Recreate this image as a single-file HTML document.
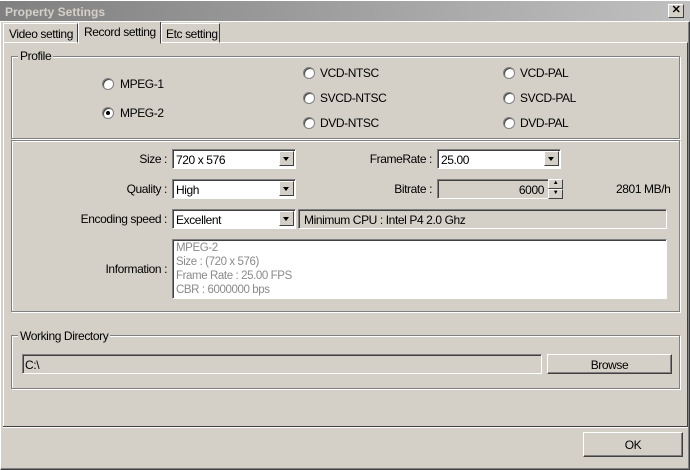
<!DOCTYPE html>
<html><head><style>
*{margin:0;padding:0;box-sizing:border-box}
body{width:690px;height:470px;background:#d4d0c8;font-family:"Liberation Sans",sans-serif;font-size:11px;color:#000;position:relative;overflow:hidden}
.a{position:absolute;white-space:nowrap;letter-spacing:-0.4px}
.title{left:0;top:0;width:690px;height:21px;background:linear-gradient(90deg,#808080,#c0c0c0);color:#d4d0c8;font-weight:bold;font-size:12px;padding:4px 5px;border-top:1px solid #fff;letter-spacing:0}
.x{left:668px;top:4px;width:16px;height:14px;background:#d4d0c8;border:1px solid;border-color:#fff #404040 #404040 #fff;font-size:11px;font-weight:bold;text-align:center;line-height:11px;color:#000}
.grp{border:1px solid #808080;box-shadow:1px 1px 0 #fff,inset 1px 1px 0 #fff}
.lbl{background:#d4d0c8;padding:0 2px}
.radio{width:12px;height:12px;border-radius:50%;background:#fff;border:1px solid #808080;box-shadow:inset 1px 1px 0 #404040}
.dot{position:absolute;left:3px;top:3px;width:4px;height:4px;border-radius:50%;background:#000}
.sunk{border:1px solid;border-color:#808080 #fff #fff #808080;box-shadow:inset 1px 1px 0 #404040}
.combo{background:#fff;padding:3px 3px;font-size:12px}
.arr{position:absolute;right:1px;top:1px;width:15px;height:15px;background:#d4d0c8;border:1px solid;border-color:#fff #404040 #404040 #fff}
.arr:after{content:"";position:absolute;left:3px;top:5px;border:3.5px solid transparent;border-top:4px solid #000}
.btn{background:#d4d0c8;border:1px solid;border-color:#fff #404040 #404040 #fff;box-shadow:inset -1px -1px 0 #808080;text-align:center;font-size:12px}
.r{text-align:right;font-size:12px}
</style></head><body>
<div class="a title">Property Settings</div>
<div class="a x">✕</div>
<div class="a" style="left:3px;top:42px;width:685px;height:385px;border-left:1px solid #fff;border-top:1px solid #fff;border-right:1px solid #404040"></div>
<div class="a" style="left:3px;top:23px;width:75px;height:20px;border:1px solid;border-color:#fff #404040 transparent #fff;font-size:12px;padding:3px 5px">Video setting</div>
<div class="a" style="left:78px;top:21px;width:83px;height:23px;border:1px solid;border-color:#fff #404040 transparent #fff;background:#d4d0c8;font-size:12px;padding:3px 5px">Record setting</div>
<div class="a" style="left:161px;top:23px;width:59px;height:20px;border:1px solid;border-color:#fff #404040 transparent #fff;font-size:12px;padding:3px 4px">Etc setting</div>
<div class="a grp" style="left:11px;top:56px;width:669px;height:83px"></div>
<div class="a lbl" style="left:18px;top:49px;font-size:12px">Profile</div>
<div class="a radio" style="left:102px;top:78px"></div><div class="a" style="left:120px;top:77px;font-size:12px">MPEG-1</div>
<div class="a radio" style="left:102px;top:107px"><div class="dot"></div></div><div class="a" style="left:120px;top:106px;font-size:12px">MPEG-2</div>
<div class="a radio" style="left:303px;top:67px"></div><div class="a" style="left:320px;top:66px;font-size:12px">VCD-NTSC</div>
<div class="a radio" style="left:303px;top:92px"></div><div class="a" style="left:320px;top:91px;font-size:12px">SVCD-NTSC</div>
<div class="a radio" style="left:303px;top:117px"></div><div class="a" style="left:320px;top:116px;font-size:12px">DVD-NTSC</div>
<div class="a radio" style="left:503px;top:67px"></div><div class="a" style="left:520px;top:66px;font-size:12px">VCD-PAL</div>
<div class="a radio" style="left:503px;top:92px"></div><div class="a" style="left:520px;top:91px;font-size:12px">SVCD-PAL</div>
<div class="a radio" style="left:503px;top:117px"></div><div class="a" style="left:520px;top:116px;font-size:12px">DVD-PAL</div>
<div class="a grp" style="left:11px;top:140px;width:669px;height:172px"></div>
<div class="a r" style="left:40px;top:152px;width:127px">Size :</div>
<div class="a sunk combo" style="left:172px;top:149px;width:124px;height:20px">720 x 576<div class="arr"></div></div>
<div class="a r" style="left:40px;top:182px;width:127px">Quality :</div>
<div class="a sunk combo" style="left:172px;top:179px;width:124px;height:20px">High<div class="arr"></div></div>
<div class="a r" style="left:40px;top:212px;width:127px">Encoding speed :</div>
<div class="a sunk combo" style="left:172px;top:209px;width:124px;height:20px">Excellent<div class="arr"></div></div>
<div class="a sunk" style="left:298px;top:209px;width:369px;height:20px;padding:3px 5px;font-size:12px">Minimum CPU : Intel P4 2.0 Ghz</div>
<div class="a r" style="left:40px;top:262px;width:127px">Information :</div>
<div class="a sunk" style="left:172px;top:239px;width:495px;height:60px;background:#fff;color:#8a8a8a;font-size:11.5px;line-height:14px;padding:1px 3px">MPEG-2<br>Size : (720 x 576)<br>Frame Rate : 25.00 FPS<br>CBR : 6000000 bps</div>
<div class="a r" style="left:330px;top:152px;width:102px">FrameRate :</div>
<div class="a sunk combo" style="left:437px;top:149px;width:124px;height:20px">25.00<div class="arr"></div></div>
<div class="a r" style="left:330px;top:182px;width:102px">Bitrate :</div>
<div class="a sunk r" style="left:437px;top:179px;width:112px;height:20px;padding:3px 4px">6000</div>
<div class="a" style="left:548px;top:179px;width:15px;height:10px;border:1px solid;border-color:#fff #404040 #404040 #fff;font-size:6px;text-align:center;line-height:7px">▲</div>
<div class="a" style="left:548px;top:189px;width:15px;height:10px;border:1px solid;border-color:#fff #404040 #404040 #fff;font-size:6px;text-align:center;line-height:7px">▼</div>
<div class="a" style="left:616px;top:182px;font-size:12px">2801 MB/h</div>
<div class="a grp" style="left:11px;top:335px;width:669px;height:54px"></div>
<div class="a lbl" style="left:18px;top:329px;font-size:12px">Working Directory</div>
<div class="a sunk" style="left:22px;top:354px;width:520px;height:20px;padding:3px 2px;font-size:12px">C:\</div>
<div class="a btn" style="left:547px;top:354px;width:125px;height:20px;padding-top:3px">Browse</div>
<div class="a" style="left:3px;top:426px;width:685px;height:2px;border-top:1px solid #404040;border-bottom:1px solid #fff"></div>
<div class="a btn" style="left:583px;top:432px;width:100px;height:25px;padding-top:5px">OK</div>
<div class="a" style="left:0;top:21px;width:690px;height:449px;border:1px solid;border-color:#fff #404040 #404040 #fff;box-shadow:inset -1px -1px 0 #808080"></div>
</body></html>
